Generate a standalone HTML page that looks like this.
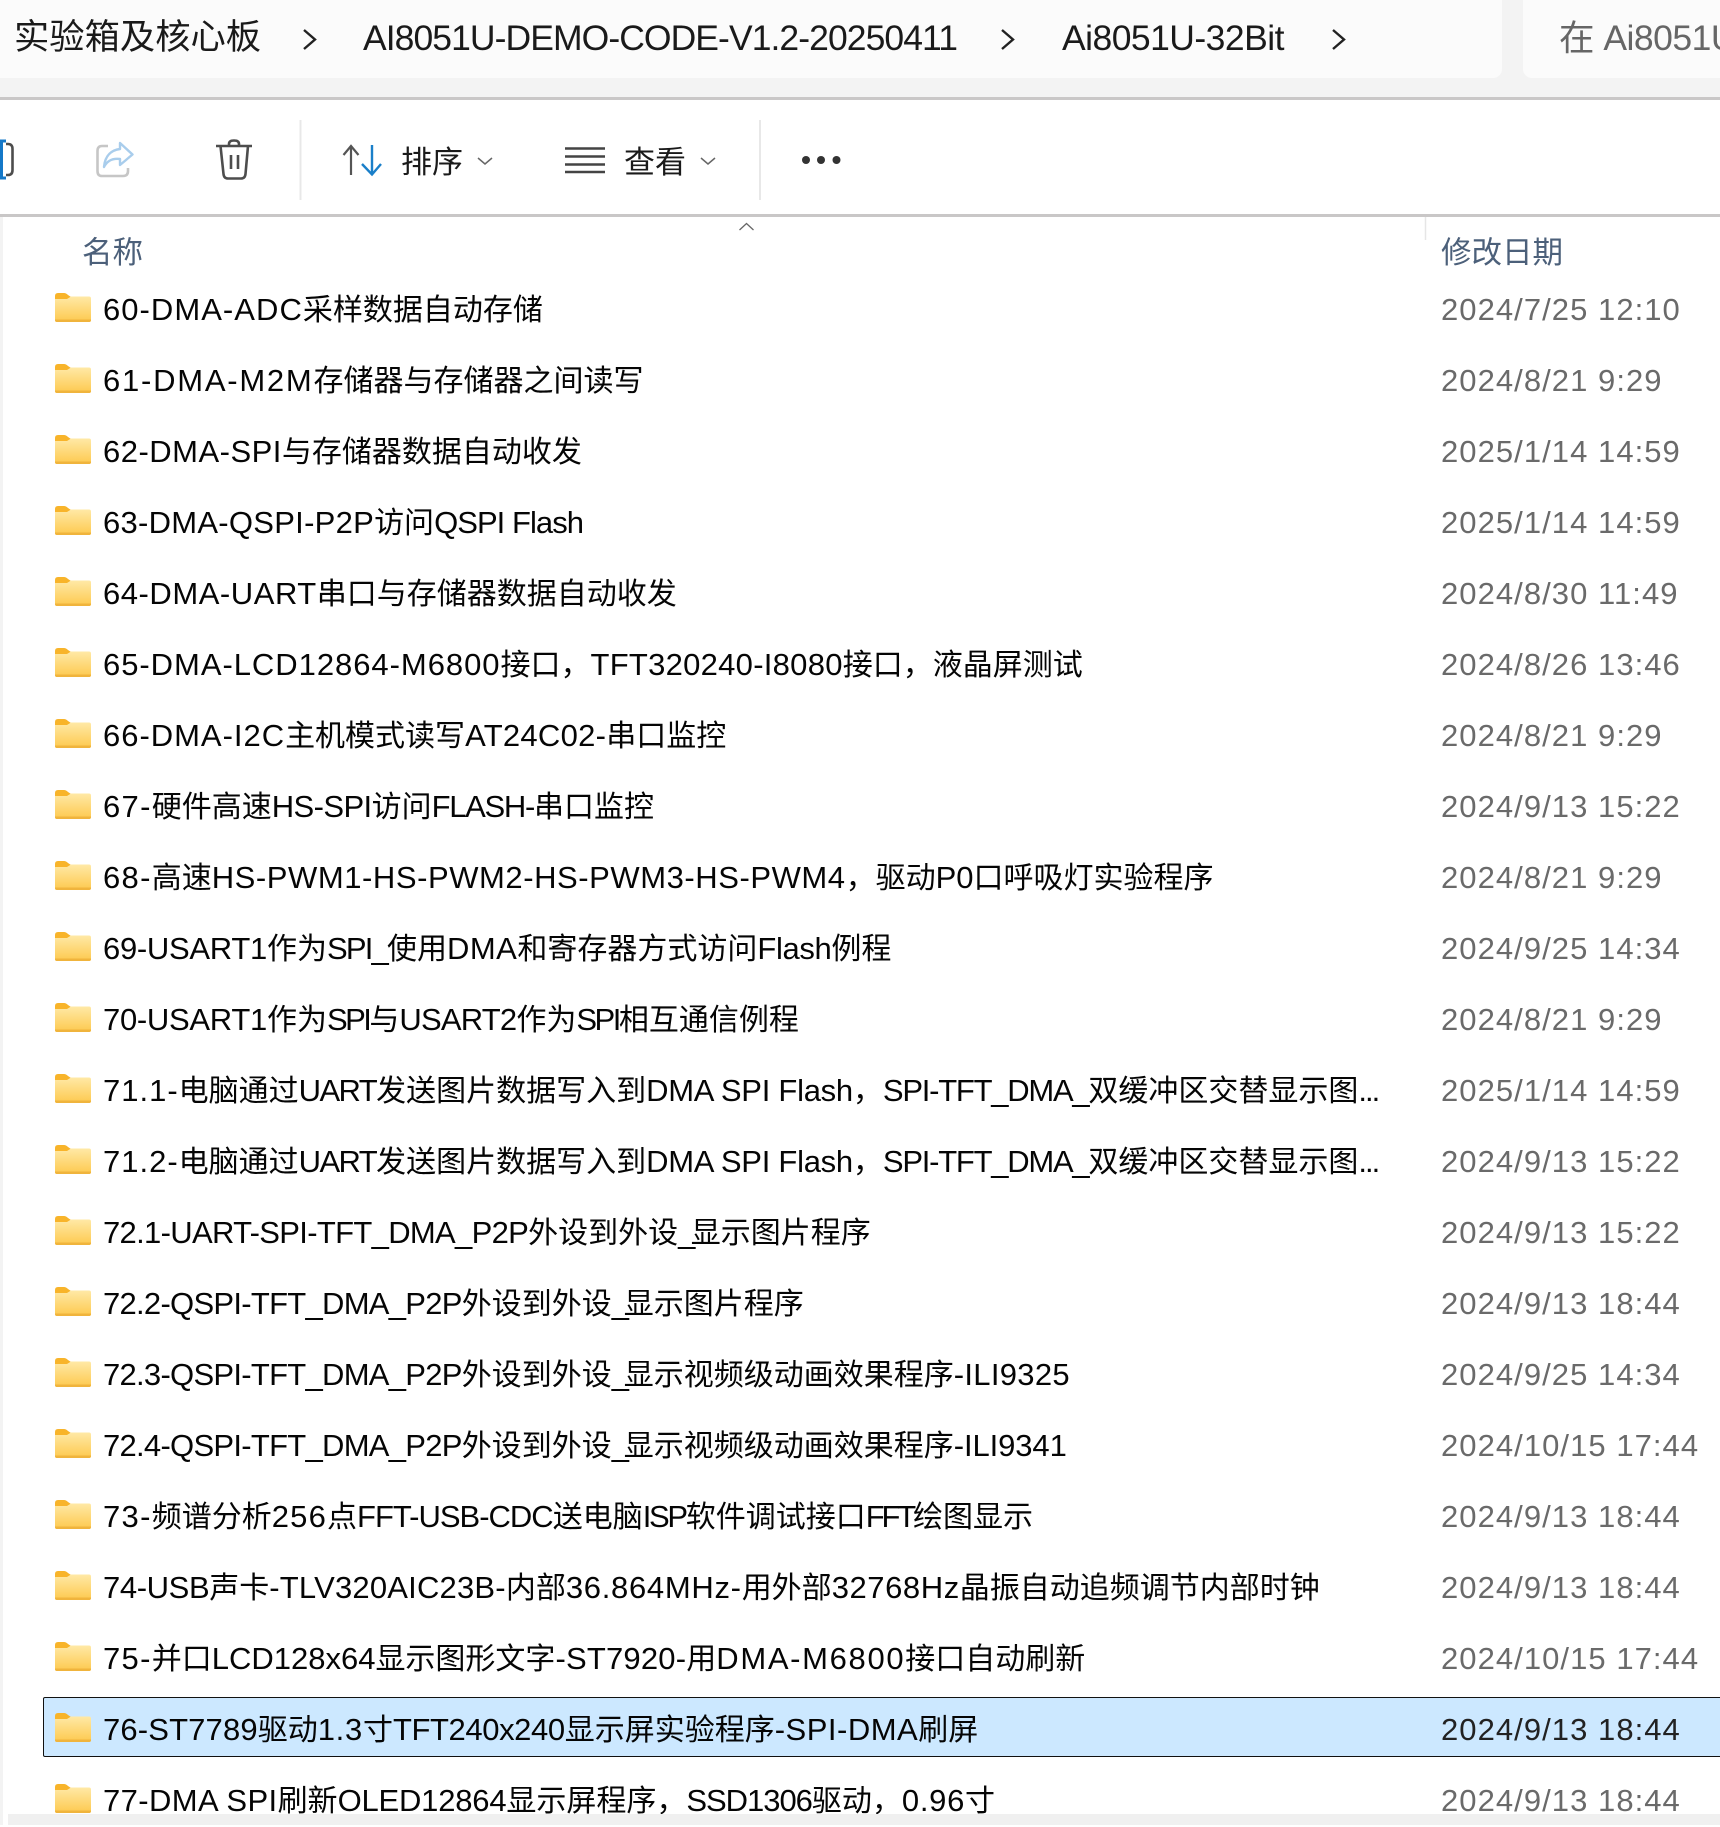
<!DOCTYPE html>
<html lang="zh-CN"><head><meta charset="utf-8"><title>Ai8051U-32Bit</title>
<style>
html,body{margin:0;padding:0}
body{width:1720px;height:1825px;position:relative;overflow:hidden;background:#fff;font-family:"Liberation Sans","Noto Sans CJK SC",sans-serif;color:#111}
.a{position:absolute}
.n{position:absolute;left:103px;height:50px;line-height:50px;font-size:30px;white-space:nowrap;margin-top:2px;color:#050505}
.d{position:absolute;left:1441px;height:50px;line-height:50px;font-size:31px;letter-spacing:1.05px;color:#6a6a6a;white-space:nowrap;margin-top:2px}
i{font-style:normal;font-size:31px}
.f{position:absolute;left:55px;width:36px;height:29px}
</style></head><body>
<svg width="0" height="0" style="position:absolute"><defs>
<linearGradient id="g" x1="0" y1="0" x2="0" y2="1"><stop offset="0" stop-color="#ffe9a6"/><stop offset="1" stop-color="#fdc94e"/></linearGradient>
<symbol id="fd" viewBox="0 0 36 29"><path d="M0 3Q0 0 3 0H9Q11 0 13 2L16 4V10H0Z" fill="#f8b42a"/><path d="M0 6H12L16 3.500H34Q36 3.500 36 5.500V27Q36 29 34 29H2Q0 29 0 27Z" fill="url(#g)"/><path d="M0 27Q0 29 2 29H34Q36 29 36 27V26.500H0Z" fill="#f0b43c"/></symbol>
</defs></svg>

<!-- top bar -->
<div class="a" style="left:0;top:0;width:1720px;height:97px;background:#f3f3f3"></div>
<div class="a" style="left:-10px;top:-10px;width:1512px;height:88px;background:#fbfbfb;border-radius:9px"></div>
<div class="a" style="left:1523px;top:-10px;width:220px;height:88px;background:#fbfbfb;border-radius:9px"></div>
<div class="a" style="left:14px;top:13px;height:50px;line-height:50px;font-size:35.300px;white-space:nowrap;color:#1a1a1a">实验箱及核心板</div>
<div class="a" style="left:363px;top:13px;height:50px;line-height:50px;font-size:35.500px;letter-spacing:-.93px;white-space:nowrap;color:#1a1a1a">AI8051U-DEMO-CODE-V1.2-20250411</div>
<div class="a" style="left:1062px;top:13px;height:50px;line-height:50px;font-size:35.500px;letter-spacing:-.54px;white-space:nowrap;color:#1a1a1a">Ai8051U-32Bit</div>
<div class="a" style="left:1559px;top:13px;height:50px;line-height:50px;font-size:35.500px;letter-spacing:-.5px;white-space:nowrap;color:#666;width:161px;overflow:hidden">在 Ai8051U</div>
<svg class="a" style="left:0;top:0" width="1720" height="240" fill="none">
<path d="M304 30L315 39.500L304 49M1002 30L1013 39.500L1002 49M1333 30L1344 39.500L1333 49" stroke="#222" stroke-width="2.400"/>
<path d="M4 141H1.500V178H4M-2 141H6M-2 178H6" stroke="#1478c8" stroke-width="3"/>
<path d="M6 144H8Q12.500 144 12.500 149V170Q12.500 175 8 175H6" stroke="#4d4d4d" stroke-width="2.600"/>
<path d="M108 146H102Q97.500 146 97.500 151V171Q97.500 176 102 176H123Q128 176 128 171V168" stroke="#c6c6c6" stroke-width="2.600"/>
<path d="M120 143L132.500 154.500L120 165V159C112 158 107 161 104 167C105 155 112 150 120 149Z" stroke="#a9cdec" stroke-width="2.400" stroke-linejoin="round"/>
<path d="M216 146H252M229 146V144Q229 140.500 234 140.500Q239 140.500 239 144V146M220.500 146L223.500 174Q224 178.500 228 178.500H241Q245 178.500 245.500 174L248 146M231 155V169M238 155V169" stroke="#4d4d4d" stroke-width="2.600"/>
<path d="M300.500 120V200M760 120V200" stroke="#e8e8e8" stroke-width="2"/>
<path d="M351 147V175M343.500 155L351 146L358.500 155" stroke="#555" stroke-width="2.200"/>
<path d="M372 145V173M362 164L372 174.500L381 164" stroke="#1a7fc9" stroke-width="2.400"/>
<path d="M478 158L485 164L492 158M701 158L708 164L715 158" stroke="#666" stroke-width="1.500"/>
<path d="M565 148.500H605M565 156.500H605M565 164.500H605M565 172H605" stroke="#444" stroke-width="2.400"/>
<circle cx="806" cy="160" r="4" fill="#333"/><circle cx="821" cy="160" r="4" fill="#333"/><circle cx="836.500" cy="160" r="4" fill="#333"/>
<path d="M739.500 230L746.500 223.500L753.500 230" stroke="#666" stroke-width="1.300"/>
<path d="M1425.500 217V282" stroke="#e6e6e6" stroke-width="1.500"/>
</svg>
<div class="a" style="left:0;top:97px;width:1720px;height:3px;background:#c9c7c7"></div>
<div class="a" style="left:0;top:214px;width:1720px;height:3px;background:#c9c7c7"></div>
<div class="a" style="left:401px;top:138px;height:50px;line-height:50px;font-size:31px;color:#1a1a1a;white-space:nowrap">排序</div>
<div class="a" style="left:624px;top:138px;height:50px;line-height:50px;font-size:31px;color:#1a1a1a;white-space:nowrap">查看</div>
<div class="a" style="left:82px;top:228px;height:50px;line-height:50px;font-size:30.500px;color:#4c607a;white-space:nowrap">名称</div>
<div class="a" style="left:1441px;top:228px;height:50px;line-height:50px;font-size:30.500px;color:#4c607a;white-space:nowrap">修改日期</div>
<div class="a" style="left:0;top:217px;width:3px;height:1608px;background:#f3f3f3"></div>

<!-- selected row -->
<div class="a" style="left:43px;top:1697px;width:1690px;height:58px;background:#cce8ff;border:1.500px solid #111;border-radius:2px"></div>

<svg class="f" style="top:293px"><use href="#fd"/></svg><div class="n" style="top:283px"><i style="letter-spacing:1.04px">60-DMA-ADC</i>采样数据自动存储</div><div class="d" style="top:283px">2024/7/25 12:10</div>
<svg class="f" style="top:364px"><use href="#fd"/></svg><div class="n" style="top:354px"><i style="letter-spacing:1.76px">61-DMA-M2M</i>存储器与存储器之间读写</div><div class="d" style="top:354px">2024/8/21 9:29</div>
<svg class="f" style="top:435px"><use href="#fd"/></svg><div class="n" style="top:425px"><i style="letter-spacing:.49px">62-DMA-SPI</i>与存储器数据自动收发</div><div class="d" style="top:425px">2025/1/14 14:59</div>
<svg class="f" style="top:506px"><use href="#fd"/></svg><div class="n" style="top:496px"><i style="letter-spacing:.27px">63-DMA-QSPI-P2P</i>访问<i style="letter-spacing:-.95px">QSPI Flash</i></div><div class="d" style="top:496px">2025/1/14 14:59</div>
<svg class="f" style="top:577px"><use href="#fd"/></svg><div class="n" style="top:567px"><i style="letter-spacing:.54px">64-DMA-UART</i>串口与存储器数据自动收发</div><div class="d" style="top:567px">2024/8/30 11:49</div>
<svg class="f" style="top:648px"><use href="#fd"/></svg><div class="n" style="top:638px"><i style="letter-spacing:.96px">65-DMA-LCD12864-M6800</i>接口，<i style="letter-spacing:.27px">TFT320240-I8080</i>接口，液晶屏测试</div><div class="d" style="top:638px">2024/8/26 13:46</div>
<svg class="f" style="top:719px"><use href="#fd"/></svg><div class="n" style="top:709px"><i style="letter-spacing:.98px">66-DMA-I2C</i>主机模式读写<i style="letter-spacing:.27px">AT24C02-</i>串口监控</div><div class="d" style="top:709px">2024/8/21 9:29</div>
<svg class="f" style="top:790px"><use href="#fd"/></svg><div class="n" style="top:780px"><i style="letter-spacing:1.3px">67-</i>硬件高速<i style="letter-spacing:-.58px">HS-SPI</i>访问<i style="letter-spacing:-1.3px">FLASH-</i>串口监控</div><div class="d" style="top:780px">2024/9/13 15:22</div>
<svg class="f" style="top:861px"><use href="#fd"/></svg><div class="n" style="top:851px"><i style="letter-spacing:1.3px">68-</i>高速<i style="letter-spacing:.56px">HS-PWM1-HS-PWM2-HS-PWM3-HS-PWM4</i>，驱动<i>P0</i>口呼吸灯实验程序</div><div class="d" style="top:851px">2024/8/21 9:29</div>
<svg class="f" style="top:932px"><use href="#fd"/></svg><div class="n" style="top:922px"><i style="letter-spacing:-.29px">69-USART1</i>作为<i style="letter-spacing:-1.8px">SPI_</i>使用<i style="letter-spacing:.5px">DMA</i>和寄存器方式访问<i style="letter-spacing:-.35px">Flash</i>例程</div><div class="d" style="top:922px">2024/9/25 14:34</div>
<svg class="f" style="top:1003px"><use href="#fd"/></svg><div class="n" style="top:993px"><i style="letter-spacing:-.29px">70-USART1</i>作为<i style="letter-spacing:-2.5px">SPI</i>与<i style="letter-spacing:-.8px">USART2</i>作为<i style="letter-spacing:-2.5px">SPI</i>相互通信例程</div><div class="d" style="top:993px">2024/8/21 9:29</div>
<svg class="f" style="top:1074px"><use href="#fd"/></svg><div class="n" style="top:1064px"><i style="letter-spacing:1px">71.1-</i>电脑通过<i style="letter-spacing:-1.6px">UART</i>发送图片数据写入到<i style="letter-spacing:-.26px">DMA SPI Flash</i>，<i style="letter-spacing:-1.25px">SPI-TFT_DMA_</i>双缓冲区交替显示图<i style="letter-spacing:-2px">...</i></div><div class="d" style="top:1064px">2025/1/14 14:59</div>
<svg class="f" style="top:1145px"><use href="#fd"/></svg><div class="n" style="top:1135px"><i style="letter-spacing:1px">71.2-</i>电脑通过<i style="letter-spacing:-1.6px">UART</i>发送图片数据写入到<i style="letter-spacing:-.26px">DMA SPI Flash</i>，<i style="letter-spacing:-1.25px">SPI-TFT_DMA_</i>双缓冲区交替显示图<i style="letter-spacing:-2px">...</i></div><div class="d" style="top:1135px">2024/9/13 15:22</div>
<svg class="f" style="top:1216px"><use href="#fd"/></svg><div class="n" style="top:1206px"><i style="letter-spacing:-.68px">72.1-UART-SPI-TFT_DMA_P2P</i>外设到外设<i style="letter-spacing:-4.7px">_</i>显示图片程序</div><div class="d" style="top:1206px">2024/9/13 15:22</div>
<svg class="f" style="top:1287px"><use href="#fd"/></svg><div class="n" style="top:1277px"><i style="letter-spacing:-.72px">72.2-QSPI-TFT_DMA_P2P</i>外设到外设<i style="letter-spacing:-5.2px">_</i>显示图片程序</div><div class="d" style="top:1277px">2024/9/13 18:44</div>
<svg class="f" style="top:1358px"><use href="#fd"/></svg><div class="n" style="top:1348px"><i style="letter-spacing:-.72px">72.3-QSPI-TFT_DMA_P2P</i>外设到外设<i style="letter-spacing:-5.2px">_</i>显示视频级动画效果程序<i style="letter-spacing:.3px">-ILI9325</i></div><div class="d" style="top:1348px">2024/9/25 14:34</div>
<svg class="f" style="top:1429px"><use href="#fd"/></svg><div class="n" style="top:1419px"><i style="letter-spacing:-.72px">72.4-QSPI-TFT_DMA_P2P</i>外设到外设<i style="letter-spacing:-5.2px">_</i>显示视频级动画效果程序<i style="letter-spacing:-.1px">-ILI9341</i></div><div class="d" style="top:1419px">2024/10/15 17:44</div>
<svg class="f" style="top:1500px"><use href="#fd"/></svg><div class="n" style="top:1490px"><i style="letter-spacing:1.3px">73-</i>频谱分析<i style="letter-spacing:1.2px">256</i>点<i style="letter-spacing:-1px">FFT-USB-CDC</i>送电脑<i style="letter-spacing:-2.3px">ISP</i>软件调试接口<i style="letter-spacing:-3.2px">FFT</i>绘图显示</div><div class="d" style="top:1490px">2024/9/13 18:44</div>
<svg class="f" style="top:1571px"><use href="#fd"/></svg><div class="n" style="top:1561px"><i style="letter-spacing:-.38px">74-USB</i>声卡<i style="letter-spacing:.2px">-TLV320AIC23B-</i>内部<i style="letter-spacing:.7px">36.864MHz-</i>用外部<i style="letter-spacing:.57px">32768Hz</i>晶振自动追频调节内部时钟</div><div class="d" style="top:1561px">2024/9/13 18:44</div>
<svg class="f" style="top:1642px"><use href="#fd"/></svg><div class="n" style="top:1632px"><i style="letter-spacing:1.3px">75-</i>并口<i style="letter-spacing:0">LCD128x64</i>显示图形文字<i style="letter-spacing:.2px">-ST7920-</i>用<i style="letter-spacing:1.67px">DMA-M6800</i>接口自动刷新</div><div class="d" style="top:1632px">2024/10/15 17:44</div>
<svg class="f" style="top:1713px"><use href="#fd"/></svg><div class="n" style="top:1703px"><i style="letter-spacing:.15px">76-ST7789</i>驱动<i style="letter-spacing:.7px">1.3</i>寸<i style="letter-spacing:-.4px">TFT240x240</i>显示屏实验程序<i style="letter-spacing:.5px">-SPI-DMA</i>刷屏</div><div class="d" style="top:1703px;color:#222">2024/9/13 18:44</div>
<svg class="f" style="top:1784px"><use href="#fd"/></svg><div class="n" style="top:1774px"><i style="letter-spacing:.4px">77-DMA SPI</i>刷新<i style="letter-spacing:-.2px">OLED12864</i>显示屏程序，<i style="letter-spacing:-1.03px">SSD1306</i>驱动，<i style="letter-spacing:.7px">0.96</i>寸</div><div class="d" style="top:1774px">2024/9/13 18:44</div>

<div class="a" style="left:8px;top:1814px;width:1712px;height:11px;background:#f0f0f0"></div>
</body></html>
